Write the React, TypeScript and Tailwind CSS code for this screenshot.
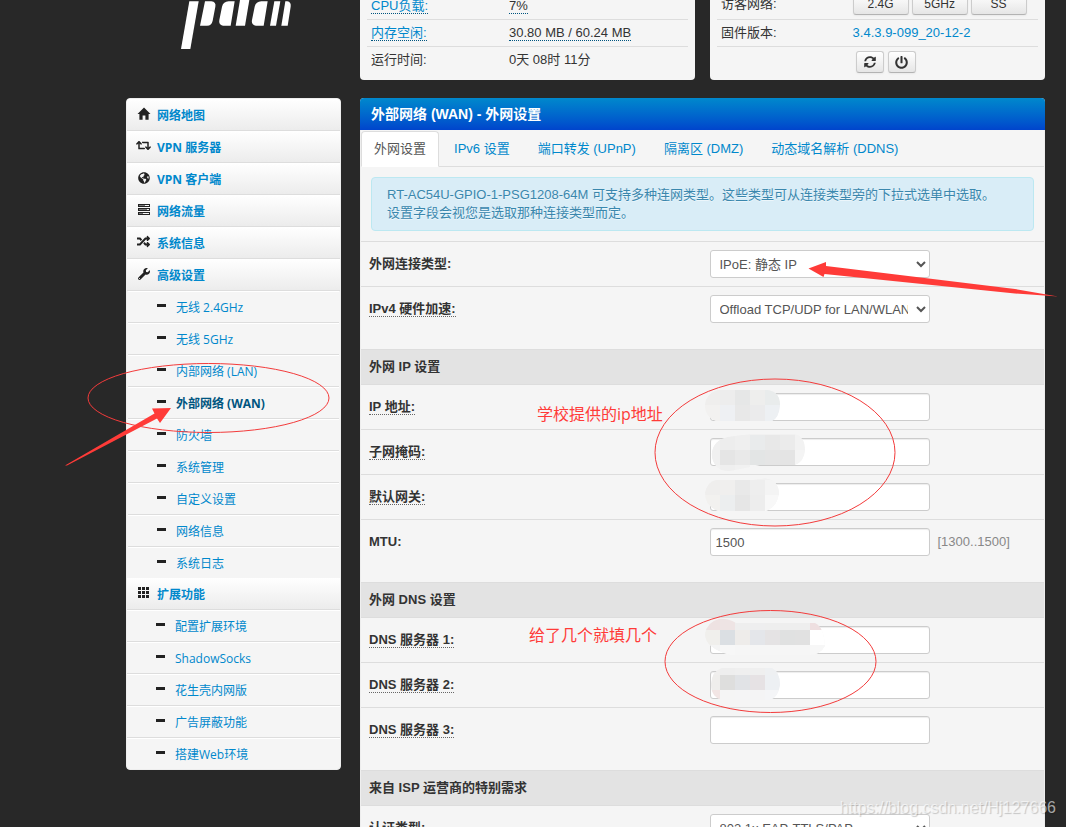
import { ReactNode } from "react";
import { FaRetweet, FaGlobeAmericas, FaRandom, FaWrench, FaPowerOff, FaSyncAlt } from "react-icons/fa";

const mainMenu = [
    { text: "网络地图", icon: <HomeIcon /> },
    { text: "VPN 服务器", icon: <FaRetweet size={15} /> },
    { text: "VPN 客户端", icon: <FaGlobeAmericas size={12} /> },
    { text: "网络流量", icon: <TasksIcon /> },
    { text: "系统信息", icon: <FaRandom size={13} /> },
    { text: "高级设置", icon: <FaWrench size={12} className="-scale-x-100 rotate-90" /> },
];

const advancedMenu = ["无线 2.4GHz", "无线 5GHz", "内部网络 (LAN)", "外部网络 (WAN)", "防火墙", "系统管理", "自定义设置", "网络信息", "系统日志"];
const extendMenu = ["配置扩展环境", "ShadowSocks", "花生壳内网版", "广告屏蔽功能", "搭建Web环境"];
const tabs = ["外网设置", "IPv6 设置", "端口转发 (UPnP)", "隔离区 (DMZ)", "动态域名解析 (DDNS)"];

function HomeIcon() {
    return (
        <svg width="14" height="14" viewBox="0 0 14 14" fill="currentColor">
            <path d="M7 0.5 L13.5 7 H11.6 V12.8 H8.4 V8.6 H5.6 V12.8 H2.4 V7 H0.5 Z" />
        </svg>
    )
}

function TasksIcon() {
    return (
        <svg width="14" height="14" viewBox="0 0 14 14" fill="none" stroke="currentColor" shapeRendering="crispEdges">
            <path d="M1 1.5H13M1 3.5H13M1 5.5H13M1 7.5H13M1 9.5H13M1 11.5H13" />
            <path d="M1.5 1V4M12.5 1V4M1.5 5V8M12.5 5V8M1.5 9V12M12.5 9V12" />
            <path d="M2 2.5H8M2 6.5H10M2 10.5H6" stroke="#777" />
        </svg>
    )
}

function GridIcon() {
    return (
        <svg width="14" height="14" viewBox="0 0 14 14" fill="currentColor" shapeRendering="crispEdges">
            <path d="M1 1h3v3H1zM5 1h3v3H5zM9 1h3v3H9zM1 5h3v3H1zM5 5h3v3H5zM9 5h3v3H9zM1 9h3v3H1zM5 9h3v3H5zM9 9h3v3H9z" />
        </svg>
    )
}

function Logo() {
    return (
        <svg className="ml-12" width="120" height="80" viewBox="0 0 360 240" fill="#fff">
            <path d="M46 4H74L49 147H21Z" />
            <path d="M93 4H112Q127 6 124 20L116 62Q113 77 99 77H78Z" />
            <path d="M164 4H182L170 77H147Q133 74 136 60L144 20Q148 5 164 4Z" />
            <path d="M198 0H226L213 77H185Z" />
            <path d="M262 4H281L269 77H246Q231 74 234 60L242 20Q246 5 262 4Z" />
            <path d="M301 4H319L306 77H288Z" />
            <path d="M334 4H340Q352 6 350 20L341 77H322Z" />
        </svg>
    )
}

function SubMenu({ items, active }: { items: string[], active?: string }) {
    return (
        <ul>
            {items.map(item => (
                <li key={item} className="h-8 border-b border-[#ddd] last:h-[31px] last:border-b-0">
                    <a href="#" className={`flex h-full items-center border-t border-white pl-[29px] pt-0.5 ${item === active ? "font-bold text-[#005580]" : "text-[#0088cc]"}`}>
                        <span className="mb-1.5 h-[3px] w-[9px] bg-[#222]" />
                        <span className="ml-2.5">{item}</span>
                    </a>
                </li>
            ))}
        </ul>
    )
}

function MenuHeader({ icon, text }: { icon: ReactNode, text: string }) {
    return (
        <a href="#" className="flex h-8 items-center border-b border-[#ddd] bg-linear-to-b from-white to-[#ececec] pl-[9px] pt-0.5 font-bold text-[#0088cc]">
            <span className="mb-1 flex w-[15px] justify-center text-[#222]">{icon}</span>
            <span className="ml-1.5">{text}</span>
        </a>
    )
}

function Section({ title, children }: { title?: string, children: ReactNode }) {
    return (
        <section className="mb-[18px]">
            {title && <h3 className="border-t border-[#ddd] bg-[#e3e3e3] px-2 py-2 font-bold">{title}</h3>}
            {children}
        </section>
    )
}

function Row({ id, label, plain, hint, children }: { id: string, label: string, plain?: boolean, hint?: string, children: ReactNode }) {
    return (
        <div className="grid grid-cols-2 items-center border-t border-[#ddd] py-2">
            <div className="pl-2">
                <label htmlFor={id} className={plain ? "font-bold" : "border-b border-dotted border-[#666] font-bold"}>{label}</label>
            </div>
            <div className="flex items-center gap-2 pl-[7px]">
                {children}
                {hint && <span className="text-[#888]">{hint}</span>}
            </div>
        </div>
    )
}

function TextInput({ id, value }: { id: string, value?: string }) {
    return <input type="text" id={id} defaultValue={value} className="h-7 w-[220px] rounded-[3px] border border-[#ccc] bg-white px-[5px] text-[#555] shadow-[inset_0_1px_1px_rgba(0,0,0,0.075)]" />
}

function SelectInput({ id, value }: { id: string, value: string }) {
    return (
        <select id={id} className="h-7 w-[220px] rounded-[3px] border border-[#ccc] bg-white px-[5px] text-[#555]">
            <option>{value}</option>
        </select>
    )
}

function Button({ label, wide, children }: { label?: string, wide?: boolean, children: ReactNode }) {
    return (
        <button aria-label={label} className={`flex h-[22px] items-center justify-center rounded-[3px] border border-[#ccc] border-b-[#b3b3b3] bg-linear-to-b from-white to-[#e6e6e6] text-xs text-[#333] shadow-xs ${wide ? "w-14" : "w-7"}`}>
            {children}
        </button>
    )
}

function StatusPanels() {
    const dotted = "border-b border-dotted border-[#005580]";
    return (
        <div className="grid grid-cols-2 gap-[15px]">
            <div className="flex flex-col justify-end rounded bg-[#f5f5f5] px-[7px] pb-[7px]">
                <table className="w-full table-fixed">
                    <tbody className="divide-y divide-[#ddd]">
                        <tr>
                            <td className="w-[43%] px-1 py-1"><a href="#" className={`text-[#0088cc] ${dotted}`}>CPU负载:</a></td>
                            <td className="px-1 py-1"><span className={dotted}>7%</span></td>
                        </tr>
                        <tr>
                            <td className="px-1 py-1"><a href="#" className={`text-[#0088cc] ${dotted}`}>内存空闲:</a></td>
                            <td className="px-1 py-1"><span className={dotted}>30.80 MB / 60.24 MB</span></td>
                        </tr>
                        <tr>
                            <td className="px-1 py-1">运行时间:</td>
                            <td className="px-1 py-1">0天 08时 11分</td>
                        </tr>
                    </tbody>
                </table>
            </div>
            <div className="flex flex-col justify-end rounded bg-[#f5f5f5] px-[7px] pb-[3px]">
                <table className="w-full table-fixed">
                    <tbody className="divide-y divide-[#ddd]">
                        <tr>
                            <td className="w-[41%] px-1 py-1">访客网络:</td>
                            <td className="px-1 py-1">
                                <div className="flex gap-[3px]">
                                    <Button wide>2.4G</Button>
                                    <Button wide>5GHz</Button>
                                    <Button wide>SS</Button>
                                </div>
                            </td>
                        </tr>
                        <tr>
                            <td className="px-1 py-1">固件版本:</td>
                            <td className="px-1 py-1"><a href="#" className="text-[#0088cc]">3.4.3.9-099_20-12-2</a></td>
                        </tr>
                        <tr>
                            <td />
                            <td className="px-1 py-1">
                                <div className="flex gap-1 pl-[3px]">
                                    <Button label="刷新"><FaSyncAlt size={12} /></Button>
                                    <Button label="电源"><FaPowerOff size={13} /></Button>
                                </div>
                            </td>
                        </tr>
                    </tbody>
                </table>
            </div>
        </div>
    )
}

// pixelated patches that hide the address values
const patches = [
    {
        id: "patch-ip", x: 705, y: 390, size: 15,
        shape: "M718 390H768Q780 392 780 405Q779 418 772 421H716Q705 417 705 405Q706 393 718 390Z",
        rows: [["#efeeed", "#ededed", "#e6e7e7", "#eeeeed", "#e9ecec"], ["#f2f1f0", "#eef0f3", "#e8e8e8", "#ebebec", "#edf0f3"], ["#f2f1f0", "#eef0f3", "#e8e8e8", "#ebebec", "#edf0f3"]],
    },
    {
        id: "patch-mask", x: 705, y: 435, size: 15,
        shape: "M712 452Q714 440 728 437L750 434H795Q805 437 805 450Q804 462 795 465H760L735 470Q722 473 716 466Q711 460 712 452Z",
        rows: [["#f0f0f0", "#ededed", "#efefef", "#e9ebec", "#e8e8e8", "#ebebeb", "#f2f2f2"], ["#f0f0f0", "#e5e5e5", "#e9e9e9", "#e3e5e5", "#e5e5e5", "#e4e4e4", "#f4f4f4"], ["#f2f2f2", "#efefef", "#f1f1f1", "#f5f5f5", "#f5f5f5", "#f5f5f5", "#f5f5f5"]],
    },
    {
        id: "patch-gateway", x: 705, y: 480, size: 15,
        shape: "M716 480H750L765 478Q779 480 779 494Q777 507 766 511H718Q705 506 705 493Q707 482 716 480Z",
        rows: [["#efeeed", "#f0efee", "#e9e9e9", "#eeeeee", "#f4f4f4"], ["#f2f1ef", "#eceeef", "#e6e6e6", "#ededed", "#f8f8f8"], ["#f2f1ef", "#eceeef", "#e6e6e6", "#ededed", "#f8f8f8"]],
    },
    {
        id: "patch-dns1", x: 705, y: 615, size: 15,
        shape: "M719 619Q727 618 736 623H815Q824 627 825 646Q820 655 810 655H730Q705 648 705 634Q707 622 719 619Z",
        rows: [["#eee2e2", "#eee4e4", "#eeeeee", "#eeeeef", "#eeeeee", "#eeeeee", "#eeeeee", "#eedfe0"], ["#f0efec", "#dbdfe3", "#eeecea", "#e4e6ea", "#e5e3e4", "#e0e1e1", "#e1e1e1", "#ffffff"], ["#f4f4f4", "#f7f7f7", "#f6f6f6", "#f6f6f6", "#f6f6f6", "#f6f6f6", "#f6f6f6", "#f7f7f7"]],
    },
    {
        id: "patch-dns2", x: 705, y: 660, size: 15,
        shape: "M722 668H772Q780 672 780 685Q778 698 770 700H722Q711 697 711 684Q712 671 722 668Z",
        rows: [["#f0efee", "#eeeeee", "#efefef", "#efefef", "#eef0f2"], ["#efeeec", "#dededd", "#e1e3e6", "#e6e2e4", "#edf0f3"], ["#f2e5e4", "#f5f5f5", "#f5f5f6", "#f4f4f5", "#f4f5f7"]],
    },
];

function Annotations() {
    return (
        <div className="pointer-events-none absolute inset-0 overflow-hidden font-['Open_Sans','Noto_Sans_CJK_SC',sans-serif] text-base text-[#ff3b38]">
            <svg className="absolute left-0 top-0" width="1066" height="827" viewBox="0 0 1066 827">
                {patches.map(patch => (
                    <g key={patch.id}>
                        <clipPath id={patch.id}><path d={patch.shape} /></clipPath>
                        <g clipPath={`url(#${patch.id})`}>
                            <path d={patch.shape} fill="#f1f1f1" />
                            {patch.rows.map((row, r) => row.map((color, c) => (
                                <rect key={`${r}-${c}`} x={patch.x + c * patch.size} y={patch.y + r * patch.size} width={patch.size} height={patch.size} fill={color} shapeRendering="crispEdges" />
                            )))}
                        </g>
                    </g>
                ))}
                <g fill="none" stroke="#f33b3b" strokeWidth="1">
                    <ellipse cx="208.5" cy="398" rx="120.5" ry="34.5" />
                    <ellipse cx="775" cy="452.5" rx="120" ry="73.5" />
                    <ellipse cx="770.5" cy="661.5" rx="105.5" ry="51" />
                </g>
                <g fill="#ff3b38">
                    <path d="M65 465.5L154.5 413.5L152 408.5L171 408L160 423L157 418.5L67 465.5Z" />
                    <path d="M808.5 268.5L826 262V266L1015 289L1058 296.5L1015 293.5L824.5 274L823.5 277Z" />
                </g>
            </svg>
            <span className="absolute left-[537px] top-[402px]">学校提供的ip地址</span>
            <span className="absolute left-[529px] top-[623px]">给了几个就填几个</span>
            <span className="absolute bottom-[7px] right-2.5 font-['Liberation_Sans',sans-serif] text-white/60 [text-shadow:1px_1px_1px_rgba(0,0,0,0.2)]">https://blog.csdn.net/Hj127666</span>
        </div>
    )
}

export default function App() {
    return (
        <div className="relative h-screen overflow-hidden bg-[#282828] pl-[126px] pr-[21px] font-['Liberation_Sans','Noto_Sans_CJK_SC',sans-serif] text-[13px]/[18px] text-[#333]">
            <header className="mb-[18px] flex h-20 flex-col justify-end overflow-hidden">
                <div className="grid shrink-0 grid-cols-[215px_1fr] items-end gap-[19px]">
                    <Logo />
                    <StatusPanels />
                </div>
            </header>
            <div className="grid grid-cols-[215px_1fr] items-start gap-[19px]">
                <nav className="overflow-hidden rounded border border-[#eee] bg-[#f5f5f5] font-['Open_Sans','Noto_Sans_CJK_SC',sans-serif] text-xs">
                    {mainMenu.map(item => <MenuHeader key={item.text} icon={item.icon} text={item.text} />)}
                    <div className="px-px">
                        <SubMenu items={advancedMenu} active="外部网络 (WAN)" />
                    </div>
                    <MenuHeader icon={<GridIcon />} text="扩展功能" />
                    <SubMenu items={extendMenu} />
                </nav>
                <main className="overflow-hidden rounded bg-[#f5f5f5]">
                    <h2 className="bg-linear-to-b from-[#0088cc] to-[#0044cc] px-[11px] py-[7px] text-sm/[18px] font-bold text-white">外部网络 (WAN) - 外网设置</h2>
                    <div className="border-x border-[#eee] pt-px">
                        <ul className="flex gap-0.5 border-b border-[#ddd]">
                            {tabs.map((tab, i) => (
                                <li key={tab} className="-mb-px">
                                    <a href="#" className={`block rounded-t border px-3 py-2 ${i === 0 ? "border-[#ddd] border-b-white bg-white text-[#555]" : "border-transparent text-[#0088cc]"}`}>{tab}</a>
                                </li>
                            ))}
                        </ul>
                        <div className="m-2.5 rounded border border-[#bce8f1] bg-[#d9edf7] px-[15px] py-2 text-[#3a87ad] [text-shadow:0_1px_0_rgba(255,255,255,0.5)]">
                            <p>RT-AC54U-GPIO-1-PSG1208-64M 可支持多种连网类型。这些类型可从连接类型旁的下拉式选单中选取。</p>
                            <p>设置字段会视您是选取那种连接类型而定。</p>
                        </div>
                        <Section>
                            <Row id="wan_proto" label="外网连接类型:" plain><SelectInput id="wan_proto" value="IPoE: 静态 IP" /></Row>
                            <Row id="hw_nat" label="IPv4 硬件加速:"><SelectInput id="hw_nat" value="Offload TCP/UDP for LAN/WLAN" /></Row>
                        </Section>
                        <Section title="外网 IP 设置">
                            <Row id="ipaddr" label="IP 地址:"><TextInput id="ipaddr" /></Row>
                            <Row id="netmask" label="子网掩码:"><TextInput id="netmask" /></Row>
                            <Row id="gateway" label="默认网关:"><TextInput id="gateway" /></Row>
                            <Row id="mtu" label="MTU:" plain hint="[1300..1500]"><TextInput id="mtu" value="1500" /></Row>
                        </Section>
                        <Section title="外网 DNS 设置">
                            <Row id="dns_1" label="DNS 服务器 1:"><TextInput id="dns_1" /></Row>
                            <Row id="dns_2" label="DNS 服务器 2:"><TextInput id="dns_2" /></Row>
                            <Row id="dns_3" label="DNS 服务器 3:"><TextInput id="dns_3" /></Row>
                        </Section>
                        <Section title="来自 ISP 运营商的特别需求">
                            <Row id="auth" label="认证类型:" plain><SelectInput id="auth" value="802.1x EAP-TTLS/PAP" /></Row>
                        </Section>
                    </div>
                </main>
            </div>
            <Annotations />
        </div>
    )
}
